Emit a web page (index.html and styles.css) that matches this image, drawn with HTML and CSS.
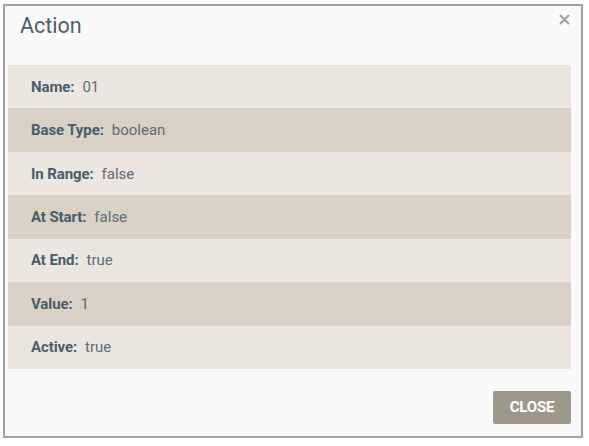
FILE: index.html
```html
<!DOCTYPE html>
<html>
<head>
<meta charset="utf-8">
<link rel="stylesheet" href="styles.css">
</head>
<body>
<div class="dialog">
  <div class="header">
    <h1 class="title">Action</h1>
    <svg class="close-x" width="11" height="11" viewBox="0 0 11 11"><path d="M1 1L10 10M10 1L1 10" stroke="#9ba3aa" stroke-width="2" fill="none"/></svg>
  </div>
  <div class="rows">
    <div class="row light"><span class="label">Name:</span><span class="value">01</span></div>
    <div class="row dark"><span class="label">Base Type:</span><span class="value">boolean</span></div>
    <div class="row light"><span class="label">In Range:</span><span class="value">false</span></div>
    <div class="row dark"><span class="label">At Start:</span><span class="value">false</span></div>
    <div class="row light"><span class="label">At End:</span><span class="value">true</span></div>
    <div class="row dark"><span class="label">Value:</span><span class="value">1</span></div>
    <div class="row light"><span class="label">Active:</span><span class="value">true</span></div>
  </div>
  <div class="footer">
    <button class="btn-close">CLOSE</button>
  </div>
</div>
</body>
</html>
```
FILE: styles.css
```css
html, body {
  margin: 0;
  padding: 0;
  background: #ffffff;
}
body {
  padding: 4px 0 0 3px;
  font-family: Roboto, "Liberation Sans", sans-serif;
}
.dialog {
  box-sizing: border-box;
  width: 580px;
  height: 434px;
  border: 2px solid #a2a2a2;
  background: #fafafa;
  display: flex;
  flex-direction: column;
}
.header {
  position: relative;
  height: 59px;
  padding-left: 15px;
}
.title {
  margin: 0;
  padding-top: 7px;
  font-size: 21.5px;
  font-weight: 400;
  color: #4d5e6e;
  line-height: 26px;
}
.close-x {
  position: absolute;
  right: 11px;
  top: 8px;
}
.rows {
  margin: 0 10px 0 3px;
  display: flex;
  flex-direction: column;
}
.row {
  height: 43.43px;
  display: flex;
  align-items: center;
  padding-left: 23px;
  font-size: 15px;
}
.light { background: #ebe6df; }
.dark { background: #d9d1c5; }
.label {
  font-weight: 700;
  color: #4a5c6c;
  margin-right: 8px;
  letter-spacing: -0.1px;
}
.value {
  color: #5d6c78;
}
.footer {
  display: flex;
  justify-content: flex-end;
  padding: 22px 10px 0 0;
}
.btn-close {
  width: 78px;
  height: 33px;
  border: none;
  border-radius: 2px;
  background: #9c998a;
  color: #ffffff;
  font-family: Roboto, "Liberation Sans", sans-serif;
  font-weight: 700;
  font-size: 15px;
  letter-spacing: -0.2px;
  padding: 0;
}
```
